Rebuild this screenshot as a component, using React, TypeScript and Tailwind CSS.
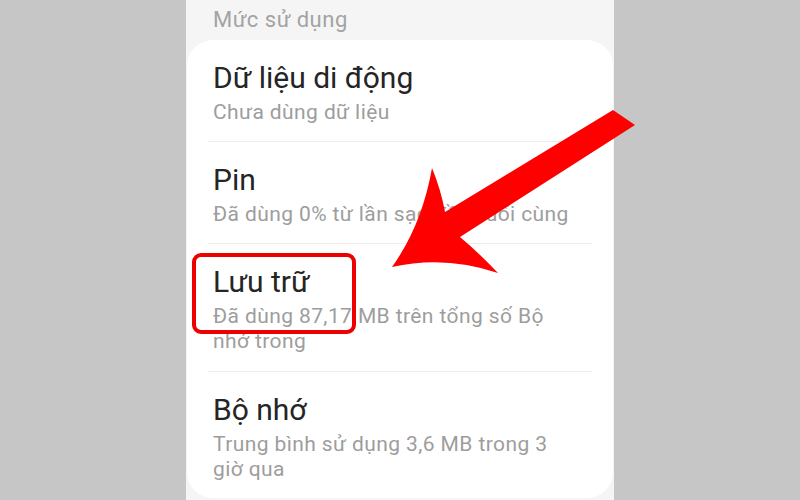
import React from 'react';

const ROWS = [
  { title: 'Dữ liệu di động', lines: ['Chưa dùng dữ liệu'], pb: 'pb-[16px]' },
  { title: 'Pin', lines: ['Đã dùng 0% từ lần sạc đầy cuối cùng'], pb: 'pb-[16px]' },
  { title: 'Lưu trữ', lines: ['Đã dùng 87,17 MB trên tổng số Bộ', 'nhớ trong'], pb: 'pb-[17px]' },
  { title: 'Bộ nhớ', lines: ['Trung bình sử dụng 3,6 MB trong 3', 'giờ qua'], pb: 'pb-[16px]' },
];

function UsageRow({ title, lines, pb }: { title: string; lines: string[]; pb: string }) {
  return (
    <div className={`pl-[26px] pr-[20px] pt-[18px] ${pb}`}>
      <div className="text-[30px] leading-[40px] text-[#252525]">{title}</div>
      <div className="mt-[2px] text-[21px] leading-[25px] tracking-[0.4px] text-[#9d9d9d]">
        {lines.map((l) => (
          <div key={l} className="whitespace-nowrap">{l}</div>
        ))}
      </div>
    </div>
  );
}

// red annotation arrow drawn over the screenshot
function Arrow() {
  return (
    <svg className="absolute left-0 top-0" width="800" height="500" viewBox="0 0 800 500">
      <path
        d="M613 110 L635 125 L460 237 Q478 252 498 273 Q445 255 392 267 Q422 225 432 168 Q441 190 445 212 Z"
        fill="#ff0000"
      />
    </svg>
  );
}

export default function App() {
  return (
    <div
      className="relative flex h-[500px] w-[800px] overflow-hidden bg-[#c6c6c6]"
      style={{ fontFamily: 'Roboto, "Noto Sans", sans-serif' }}
    >
      <div className="w-[186px]" />
      <div className="flex w-[428px] flex-col bg-[#f5f5f5]">
        <div className="h-[40px] pl-[27px] pt-[6px] text-[22px] leading-[28px] tracking-[0.5px] text-[#a3a3a3]">Mức sử dụng</div>
        <div className="mx-[1px] rounded-[26px] bg-white">
          {ROWS.map((row, i) => (
            <div key={row.title}>
              {i > 0 && <div className="mx-[21px] h-px bg-[#ececec]" />}
              <UsageRow {...row} />
            </div>
          ))}
        </div>
      </div>
      <div className="flex-1" />

      <div className="absolute left-[192px] top-[253px] h-[81px] w-[164px] rounded-[9px] border-[4px] border-[#ec0000]" />
      <Arrow />
    </div>
  );
}
